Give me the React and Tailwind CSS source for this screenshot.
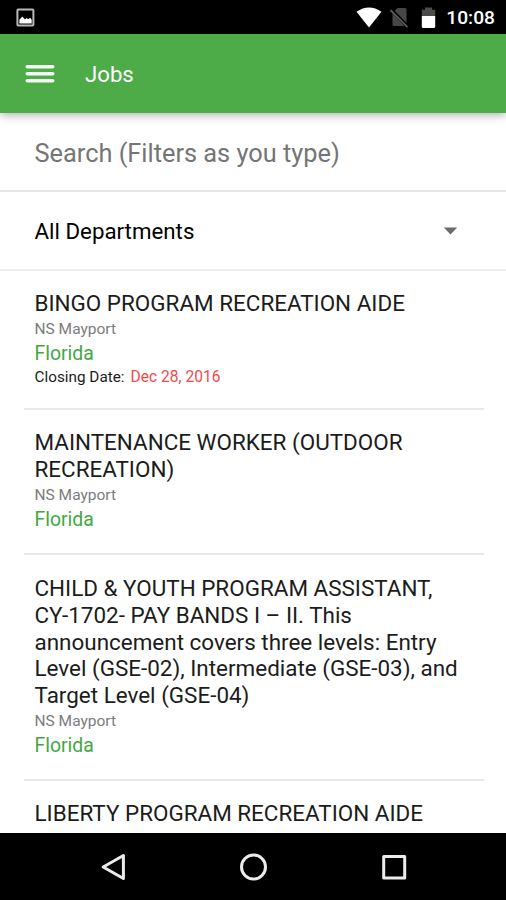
const jobs = [
  { title: ["BINGO PROGRAM RECREATION AIDE"], date: "Dec 28, 2016", cls: "h-[139px] pt-[19px]" },
  { title: ["MAINTENANCE WORKER (OUTDOOR", "RECREATION)"], cls: "h-[145px] pt-[19px]" },
  {
    title: [
      "CHILD & YOUTH PROGRAM ASSISTANT,",
      "CY-1702- PAY BANDS I – II. This",
      "announcement covers three levels: Entry",
      "Level (GSE-02), Intermediate (GSE-03), and",
      "Target Level (GSE-04)",
    ],
    cls: "h-[226px] pt-[20px]",
  },
];

function Title({ lines }) {
  return (
    <h2 className="text-[22.45px] leading-[26.8px] whitespace-nowrap text-[#1c1c1c]">
      {lines.map((l) => (
        <span key={l} className="block">{l}</span>
      ))}
    </h2>
  );
}

function Job({ job }) {
  return (
    <article className={"ml-[23.5px] mr-[22px] shrink-0 border-b-2 border-[#e8e8e8] px-[11px] " + job.cls}>
      <Title lines={job.title} />
      <p className="text-[15.5px] leading-[24px] text-[#7c7c7c]">NS Mayport</p>
      <p className="pt-px text-[19.4px] leading-[24px] text-[#3fa83f]">Florida</p>
      {job.date && (
        <p className="flex text-[15.3px] leading-[22px] text-[#1c1c1c]">
          Closing Date:
          <span className="ml-[6px] text-[15.6px] text-[#f44a4a]">{job.date}</span>
        </p>
      )}
    </article>
  );
}

function StatusBar() {
  return (
    <div className="flex h-[34px] shrink-0 items-center bg-black pt-px text-white">
      <svg className="ml-[16px]" width="19" height="19" viewBox="0 0 19 19">
        <rect x="1.4" y="1.4" width="16" height="16" rx="1" fill="none" stroke="#b8b8b8" strokeWidth="2" />
        <path d="M3.4 15.6v-3.8l2.9-3.3 2.7 3 1.6-1.4 1.5 1.2 2-1.5 1.6 2v3.8z" fill="white" />
      </svg>
      <svg className="ml-auto" width="26" height="22" viewBox="0 0 26 22">
        <path d="M0.5 4.800Q13 -3.700 25.500 4.800L13 20.600z" fill="white" />
      </svg>
      <svg className="ml-[8px]" width="20" height="22" viewBox="0 0 20 22">
        <path d="M7.5 1H15q1.5 0 1.5 1.5V17q0 2-1.5 2H4q-1.5 0-1.5-1.5V6z" fill="#474747" />
        <path d="M1 2.5L18 20" stroke="black" strokeWidth="3.5" />
        <path d="M0.5 3.2L17.5 20.2" stroke="#5c5c5c" strokeWidth="1.7" />
      </svg>
      <svg className="ml-[11px]" width="15" height="22" viewBox="0 0 15 22">
        <path d="M4 0.5h7v2.2h3.2V9H0.8V2.700H4z" fill="#4c4c4c" />
        <path d="M0.8 9h13.4v10.5q0 1.5-1.5 1.5H2.300q-1.5 0-1.5-1.5z" fill="white" />
      </svg>
      <span className="ml-[10px] mr-[11px] text-[19.2px] leading-[24px] font-medium">10:08</span>
    </div>
  );
}

export default function App() {
  return (
    <div className="flex h-[900px] w-[506px] flex-col overflow-hidden bg-white font-[Roboto,sans-serif]">
      <StatusBar />
      <header className="relative z-10 flex h-[79px] shrink-0 items-center bg-[#4eac48] text-white shadow-[0_2px_9px_rgba(0,0,0,0.32)]">
        <svg className="ml-[25px]" width="30" height="20" viewBox="0 0 30 20">
          <path d="M2.3 2.700H27.700M2.300 9.700H27.700M2.300 16.700H27.700" stroke="#f4fbf3" strokeWidth="3.6" strokeLinecap="round" />
        </svg>
        <h1 className="ml-[30px] pt-[2px] text-[22.2px]">Jobs</h1>
      </header>
      <div className="flex h-[79px] shrink-0 items-center border-b-2 border-[#e6e6e6] px-[34.5px] pt-[3px] text-[25.35px] text-[#757575]">
        Search (Filters as you type)
      </div>
      <div className="flex h-[79px] shrink-0 items-center justify-between border-b-2 border-[#ededed] pr-[48px] pl-[34.5px] text-[22.3px]">
        <span className="pt-[2px]">All Departments</span>
        <svg width="15" height="8" viewBox="0 0 15 8">
          <path d="M0.8 0.5H14.2L7.5 7.5z" fill="#6c6c6c" />
        </svg>
      </div>
      <main className="flex min-h-0 flex-1 flex-col overflow-hidden">
        {jobs.map((j) => (
          <Job key={j.title[0]} job={j} />
        ))}
        <div className="px-[34.5px] pt-[19px]">
          <Title lines={["LIBERTY PROGRAM RECREATION AIDE"]} />
        </div>
      </main>
      <nav className="flex h-[67px] shrink-0 items-center bg-black pl-[100px]">
        <svg width="27" height="30" viewBox="0 0 27 30" fill="none" stroke="#ececec" strokeWidth="3" strokeLinejoin="round">
          <path d="M23.4 3.5V26.5L3.2 15z" />
        </svg>
        <svg className="ml-[112px]" width="30" height="30" viewBox="0 0 30 30" fill="none" stroke="#ececec" strokeWidth="3">
          <circle cx="14.5" cy="15" r="12" />
        </svg>
        <svg className="ml-[111px]" width="28" height="30" viewBox="0 0 28 30" fill="none" stroke="#ececec" strokeWidth="3" strokeLinejoin="round">
          <rect x="3.7" y="4.5" width="21" height="21.5" />
        </svg>
      </nav>
    </div>
  );
}
